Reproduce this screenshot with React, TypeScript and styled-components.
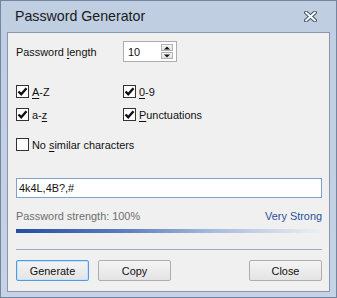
import React from "react";
import styled, { createGlobalStyle } from "styled-components";

const Global = createGlobalStyle`
  html, body { margin: 0; padding: 0; }
  body { font-family: "Liberation Sans", Arial, sans-serif; background: #c3d1e4; }
  * { box-sizing: border-box; }
`;

const Window = styled.div`
  width: 337px;
  height: 298px;
  background: linear-gradient(#c0cee2, #c6d3e5);
  border: 1px solid #74869f;
  display: flex;
  flex-direction: column;
  padding: 0 6px 5px 6px;
`;

const TitleBar = styled.div`
  height: 31px;
  flex: none;
  display: flex;
  align-items: center;
  justify-content: space-between;
  padding: 0 13px 1px 8px;
`;

const Title = styled.span`
  font-family: "Liberation Sans", Arial, sans-serif;
  font-size: 14.2px;
  color: #1a1a1a;
`;

const Client = styled.div`
  flex: 1;
  background: #f0f0f0;
  border: 1px solid #8797b0;
  padding: 8px 7px 0 8px;
  display: flex;
  flex-direction: column;
  font-size: 10.9px;
  color: #111;
`;

const LengthRow = styled.div`
  display: flex;
  align-items: center;
  height: 21px;
`;

const LengthLabel = styled.span`
  width: 107px;
`;

const Spinner = styled.div`
  width: 54px;
  height: 21px;
  border: 1px solid #abadb3;
  background: #fff;
  display: flex;
  align-items: center;
  padding: 0 3px 0 4px;
`;

const SpinValue = styled.span`
  flex: 1;
`;

const SpinButtons = styled.div`
  display: flex;
  flex-direction: column;
  gap: 1px;
`;

const SpinBtn = styled.div`
  width: 12px;
  height: 7px;
  border: 1px solid #b3b3b3;
  background: linear-gradient(#f4f4f4, #e2e2e2);
  display: flex;
  align-items: center;
  justify-content: center;
`;

const CheckGrid = styled.div`
  margin-top: 21px;
  display: grid;
  grid-template-columns: 107px 1fr;
  row-gap: 6px;
`;

const CheckRow = styled.label<{ $gap?: number }>`
  display: flex;
  align-items: center;
  height: 17px;
  gap: 3px;
  margin-top: ${(p) => p.$gap ?? 0}px;
`;

const Box = styled.span`
  width: 13px;
  height: 13px;
  border: 1px solid #333;
  background: #fff;
  display: flex;
  align-items: center;
  justify-content: center;
  flex: none;
`;

const U = styled.span`
  text-decoration: underline;
  text-underline-offset: 2px;
`;

const PasswordInput = styled.div`
  margin-top: 25px;
  height: 20px;
  border: 1px solid #7da2ce;
  background: #fff;
  display: flex;
  align-items: center;
  padding-left: 2px;
`;

const StrengthRow = styled.div`
  margin-top: 10px;
  height: 16px;
  display: flex;
  align-items: center;
  justify-content: space-between;
`;

const StrengthLabel = styled.span`
  color: #6e6e6e;
`;

const StrengthValue = styled.span`
  color: #2a5299;
`;

const Bar = styled.div`
  margin-top: 5px;
  height: 4px;
  background: linear-gradient(to right, #234ea3 0%, #5a7dbd 35%, #a9bcdc 65%, #eef0f4 100%);
`;

const Separator = styled.div`
  margin-top: 16px;
  height: 1px;
  background: #9aaabf;
`;

const ButtonRow = styled.div`
  margin-top: 10px;
  display: flex;
  gap: 9px;
`;

const Button = styled.button<{ $default?: boolean; $push?: boolean }>`
  width: 73px;
  height: 21px;
  font-family: "Liberation Sans", Arial, sans-serif;
  font-size: 10.9px;
  color: #111;
  padding: 0;
  border-radius: 2px;
  border: 1px solid ${(p) => (p.$default ? "#4f9ce0" : "#adadad")};
  background: linear-gradient(#f4f4f4, #e4e4e4);
  margin-left: ${(p) => (p.$push ? "auto" : "0")};
  box-shadow: ${(p) => (p.$default ? "inset 0 0 0 1px #c5e2f8" : "none")};
`;

const Check = () => (
  <svg width="11" height="11" viewBox="0 0 11 11">
    <path d="M1.5 5.5 L4.2 8.2 L9.5 2.2" fill="none" stroke="#111" strokeWidth="2.4" />
  </svg>
);

const CheckItem: React.FC<{ checked?: boolean; gap?: number; children: React.ReactNode }> = ({
  checked,
  gap,
  children,
}) => (
  <CheckRow $gap={gap}>
    <Box>{checked && <Check />}</Box>
    <span>{children}</span>
  </CheckRow>
);

const CloseIcon = () => (
  <svg width="13" height="11" viewBox="0 0 13 11">
    <path d="M2 1.5 L11 9.5 M11 1.5 L2 9.5" stroke="#4a5566" strokeWidth="4" strokeLinecap="round" />
    <path d="M2 1.5 L11 9.5 M11 1.5 L2 9.5" stroke="#fff" strokeWidth="1.8" strokeLinecap="round" />
  </svg>
);

const Tri: React.FC<{ up?: boolean }> = ({ up }) => (
  <svg width="6" height="4" viewBox="0 0 6 4">
    <path d={up ? "M0 3.5 L3 0.5 L6 3.5 Z" : "M0 0.5 L3 3.5 L6 0.5 Z"} fill="#111" />
  </svg>
);

export default function App() {
  return (
    <>
      <Global />
      <Window>
        <TitleBar>
          <Title>Password Generator</Title>
          <CloseIcon />
        </TitleBar>
        <Client>
          <LengthRow>
            <LengthLabel>
              Password <U>l</U>ength
            </LengthLabel>
            <Spinner>
              <SpinValue>10</SpinValue>
              <SpinButtons>
                <SpinBtn>
                  <Tri up />
                </SpinBtn>
                <SpinBtn>
                  <Tri />
                </SpinBtn>
              </SpinButtons>
            </Spinner>
          </LengthRow>
          <CheckGrid>
            <CheckItem checked>
              <U>A</U>-Z
            </CheckItem>
            <CheckItem checked>
              <U>0</U>-9
            </CheckItem>
            <CheckItem checked>
              a-<U>z</U>
            </CheckItem>
            <CheckItem checked>
              <U>P</U>unctuations
            </CheckItem>
          </CheckGrid>
          <CheckItem gap={13}>
            No <U>s</U>imilar characters
          </CheckItem>
          <PasswordInput>4k4L,4B?,#</PasswordInput>
          <StrengthRow>
            <StrengthLabel>Password strength: 100%</StrengthLabel>
            <StrengthValue>Very Strong</StrengthValue>
          </StrengthRow>
          <Bar />
          <Separator />
          <ButtonRow>
            <Button $default>Generate</Button>
            <Button>Copy</Button>
            <Button $push>Close</Button>
          </ButtonRow>
        </Client>
      </Window>
    </>
  );
}
